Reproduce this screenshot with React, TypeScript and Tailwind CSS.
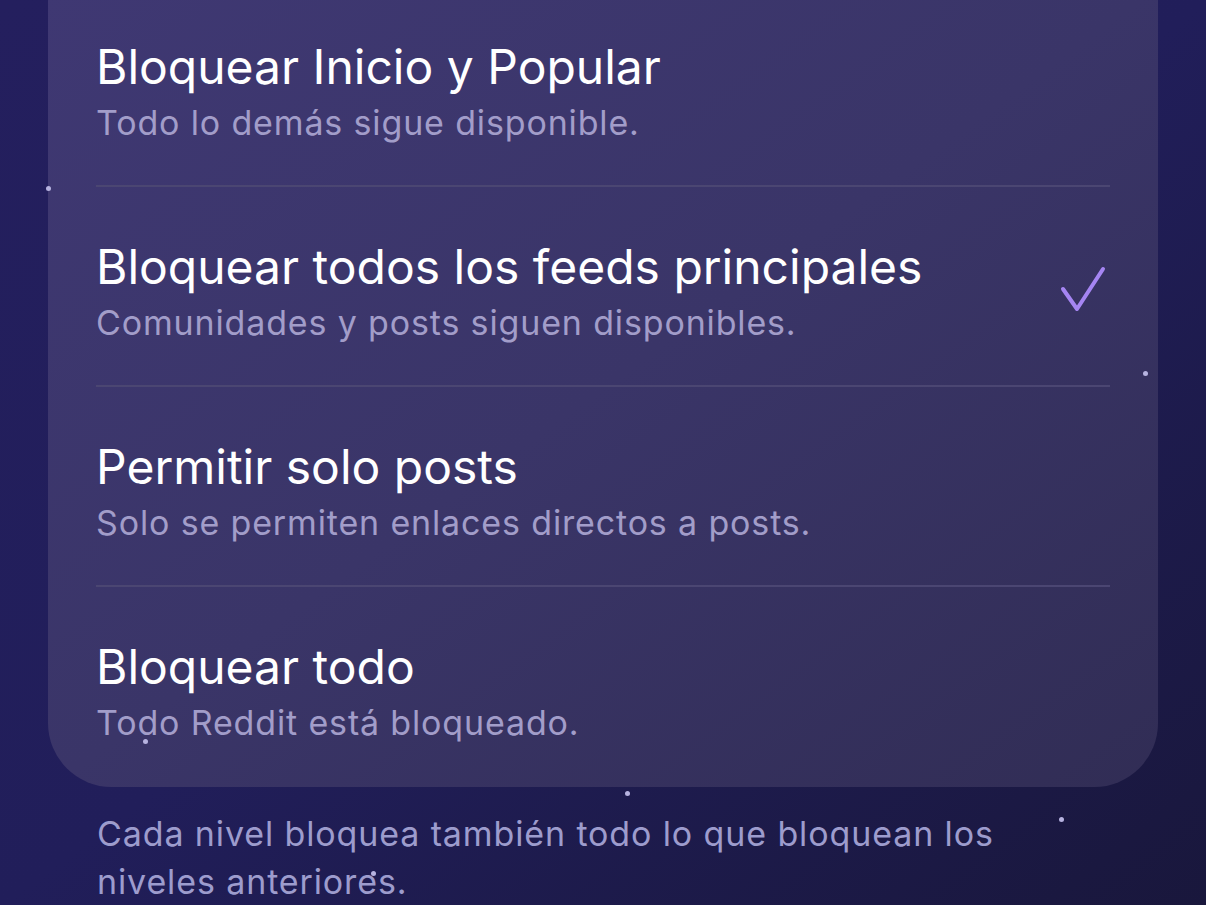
import React from "react";

const levels = [
  { title: "Bloquear Inicio y Popular", sub: "Todo lo demás sigue disponible.", checked: false },
  { title: "Bloquear todos los feeds principales", sub: "Comunidades y posts siguen disponibles.", checked: true },
  { title: "Permitir solo posts", sub: "Solo se permiten enlaces directos a posts.", checked: false },
  { title: "Bloquear todo", sub: "Todo Reddit está bloqueado.", checked: false },
];

const stars = [
  { x: 48, y: 188 },
  { x: 1145, y: 373 },
  { x: 145, y: 741 },
  { x: 627, y: 793 },
  { x: 1061, y: 819 },
  { x: 373, y: 873 },
];

function Check() {
  return (
    <svg width="48" height="48" viewBox="0 0 48 48" fill="none">
      <path
        d="M3 24 L17 44 L43 4"
        stroke="#a585f2"
        strokeWidth="4"
        strokeLinecap="round"
        strokeLinejoin="round"
      />
    </svg>
  );
}

export default function App() {
  return (
    <div
      className="relative w-[1206px] h-[905px] overflow-hidden bg-gradient-to-br from-[#241f5e] via-[#211e5a] to-[#19173c]"
      style={{ fontFamily: "Inter, 'Noto Sans', sans-serif" }}
    >
      <div className="mx-12 -mt-[13px] rounded-b-[64px] bg-gradient-to-br from-[#3f3873] via-[#3a3568] to-[#312d55] px-12">
        {levels.map((l, i) => (
          <div
            key={l.title}
            className={`flex h-[200px] items-start justify-between pt-[52px] ${
              i < levels.length - 1 ? "border-b-2 border-[#4b4672]" : ""
            }`}
          >
            <div className="flex flex-col gap-[6px]">
              <div className="text-[48px] leading-[56px] text-white">{l.title}</div>
              <div className="text-[34px] leading-[44px] text-[#a29dc9] tracking-[0.85px]">{l.sub}</div>
            </div>
            {l.checked && (
              <div className="mt-[26px] mr-[2px]">
                <Check />
              </div>
            )}
          </div>
        ))}
      </div>
      <p className="mt-[23px] pl-[97px] pr-[160px] text-[34px] leading-[48px] text-[#9d9ccd] tracking-[0.88px]">
        Cada nivel bloquea también todo lo que bloquean los niveles anteriores.
      </p>
      {stars.map((s, i) => (
        <div
          key={i}
          className="absolute h-[5px] w-[5px] rounded-full bg-[#b7b3e0]"
          style={{ left: s.x - 2, top: s.y - 2 }}
        />
      ))}
    </div>
  );
}
